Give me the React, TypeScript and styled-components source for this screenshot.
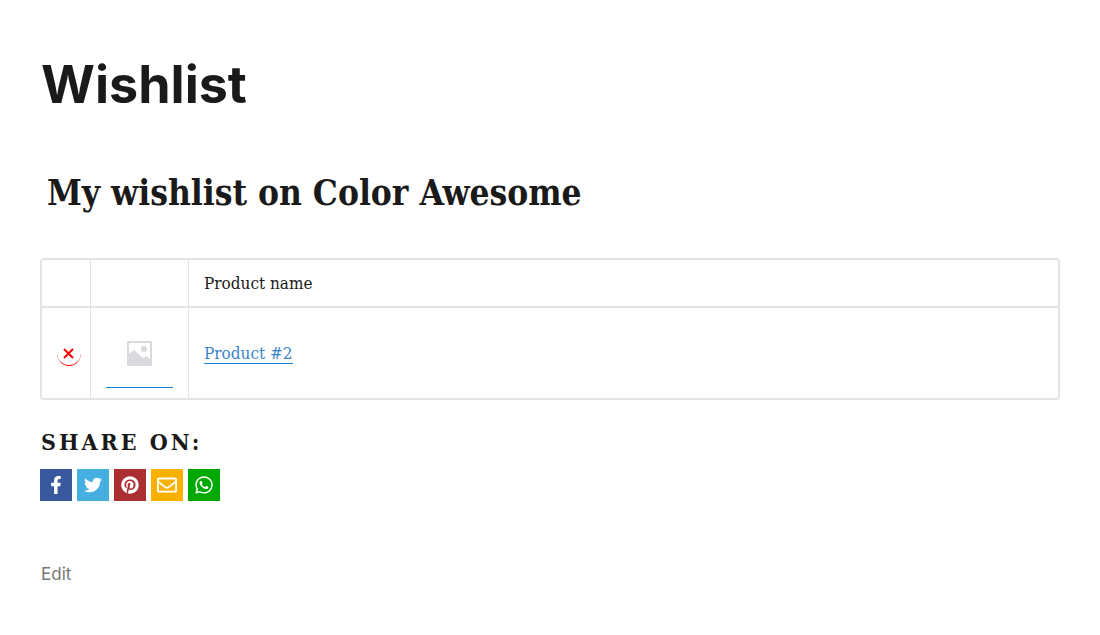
import React from 'react';
import styled, { createGlobalStyle } from 'styled-components';
import { FaFacebookF, FaTwitter, FaPinterest, FaRegEnvelope, FaWhatsapp } from 'react-icons/fa';

const serif = '"DejaVu Serif Condensed", "DejaVu Serif", serif';
const line = '#e4e4e4';

const GlobalStyle = createGlobalStyle`
  *, *::before, *::after { box-sizing: border-box; }
  body {
    margin: 0;
    background: #fff;
    color: #1a1a1a;
    font-family: ${serif};
    font-size: 17px;
  }
`;

const Page = styled.main`
  padding: 56px 40px 40px;
`;

const PageTitle = styled.h1`
  margin: 0;
  padding-left: 1px;
  font: 700 52px/58px Inter, sans-serif;
`;

const ListTitle = styled.h2`
  margin: 59px 0 0;
  padding-left: 7px;
  font-weight: 700;
  font-size: 35px;
  line-height: 40px;
`;

const Table = styled.table`
  width: 100%;
  margin-top: 45px;
  border: 2px solid ${line};
  border-radius: 4px;
  border-collapse: separate;
  border-spacing: 0;
  table-layout: fixed;
`;

const HeadCell = styled.th<{ $width?: number }>`
  width: ${(p) => (p.$width ? `${p.$width}px` : 'auto')};
  height: 48px;
  padding: 0 15px;
  border-bottom: 2px solid ${line};
  border-right: 1px solid ${line};
  text-align: left;
  font-weight: 400;
  line-height: 22px;
  &:last-child { border-right: 0; }
`;

const Cell = styled.td`
  height: 90px;
  padding: 0 15px;
  border-right: 1px solid ${line};
  line-height: 22px;
  vertical-align: middle;
  &:last-child { border-right: 0; }
`;

const RemoveButton = styled.button`
  display: flex;
  align-items: center;
  justify-content: center;
  width: 24px;
  height: 26px;
  padding: 2px 1px 0 0;
  border: 0;
  border-bottom: 1px solid #f00;
  border-radius: 50%;
  background: none;
  cursor: pointer;
`;

const ThumbLink = styled.a`
  display: flex;
  align-items: center;
  justify-content: center;
  height: 70px;
  padding-top: 2px;
  border-bottom: 1px solid #1982d1;
`;

const ProductLink = styled.a`
  display: inline-block;
  border-bottom: 1px solid #1982d1;
  color: #3a84c9;
  line-height: 20px;
  text-decoration: none;
`;

const ShareTitle = styled.h4`
  margin: 28px 0 0;
  padding-left: 1px;
  font-size: 23px;
  line-height: 28px;
  letter-spacing: 3px;
  text-transform: uppercase;
`;

const ShareList = styled.ul`
  display: flex;
  gap: 5px;
  margin: 13px 0 0;
  padding: 0;
  list-style: none;
`;

const ShareLink = styled.a<{ $color: string; $size: number }>`
  display: flex;
  align-items: center;
  justify-content: center;
  width: 32px;
  height: 32px;
  background: ${(p) => p.$color};
  color: #fff;
  font-size: ${(p) => p.$size}px;
`;

const EditLink = styled.a`
  display: inline-block;
  margin: 61px 0 0;
  padding-left: 1px;
  color: #777;
  font: 400 17px/24px Inter, sans-serif;
  text-decoration: none;
`;

const networks = [
  { name: 'Facebook', color: '#39599e', Icon: FaFacebookF, size: 18 },
  { name: 'Twitter', color: '#45afe2', Icon: FaTwitter, size: 18 },
  { name: 'Pinterest', color: '#ab2e31', Icon: FaPinterest, size: 18 },
  { name: 'Email', color: '#fbb102', Icon: FaRegEnvelope, size: 20 },
  { name: 'WhatsApp', color: '#00a901', Icon: FaWhatsapp, size: 20 },
];

const Cross = () => (
  <svg width="11" height="11" viewBox="0 0 11 11" aria-hidden="true">
    <path d="M1 1l9 9M10 1l-9 9" stroke="#f00" strokeWidth="2" />
  </svg>
);

const Placeholder = () => (
  <svg width="25" height="25" viewBox="0 0 25 25" aria-hidden="true">
    <path
      fill="#d9dadd"
      fillRule="evenodd"
      d="M1 0h23q1 0 1 1v23q0 1-1 1H1q-1 0-1-1V1Q0 0 1 0zM2 2v11l5-4 9 8 3-2 4 3V2z"
    />
    <circle cx="17" cy="8" r="3" fill="#d9dadd" />
  </svg>
);

export default function App() {
  return (
    <>
      <GlobalStyle />
      <Page>
        <PageTitle>Wishlist</PageTitle>
        <ListTitle>My wishlist on Color Awesome</ListTitle>
        <Table>
          <thead>
            <tr>
              <HeadCell $width={49} aria-label="Remove" />
              <HeadCell $width={98} aria-label="Image" />
              <HeadCell scope="col">Product name</HeadCell>
            </tr>
          </thead>
          <tbody>
            <tr>
              <Cell>
                <RemoveButton type="button" aria-label="Remove Product #2">
                  <Cross />
                </RemoveButton>
              </Cell>
              <Cell>
                <ThumbLink href="#product" aria-label="Product #2 image">
                  <Placeholder />
                </ThumbLink>
              </Cell>
              <Cell>
                <ProductLink href="#product">Product #2</ProductLink>
              </Cell>
            </tr>
          </tbody>
        </Table>
        <ShareTitle>Share on:</ShareTitle>
        <ShareList>
          {networks.map(({ name, color, Icon, size }) => (
            <li key={name}>
              <ShareLink href="#share" aria-label={name} $color={color} $size={size}>
                <Icon />
              </ShareLink>
            </li>
          ))}
        </ShareList>
        <EditLink href="#edit">Edit</EditLink>
      </Page>
    </>
  );
}
